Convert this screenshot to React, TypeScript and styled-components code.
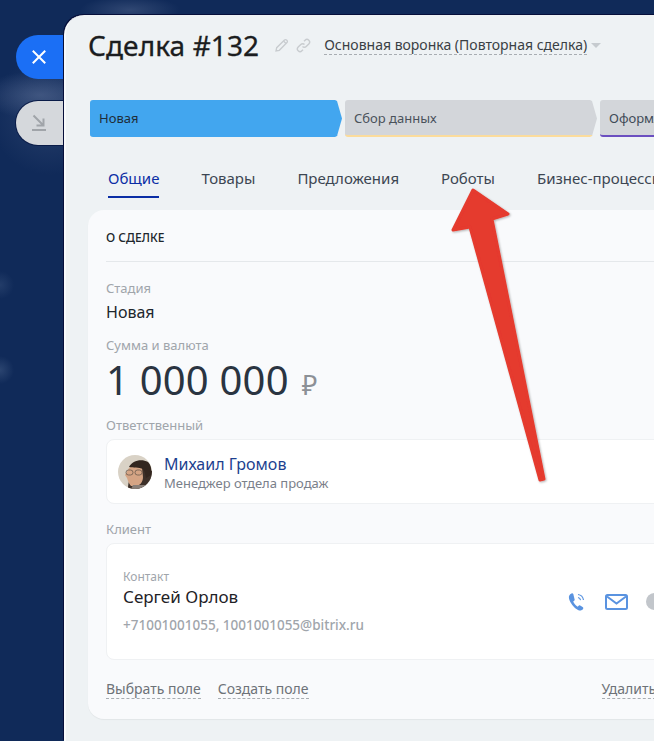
import React from "react";
import styled, { createGlobalStyle } from "styled-components";

const Global = createGlobalStyle`
  html, body { margin: 0; padding: 0; background: #0f2a5a; }
  body { font-family: "Noto Sans", "Open Sans", sans-serif; }
`;

const Page = styled.div`
  position: relative;
  width: 654px;
  height: 741px;
  overflow: hidden;
  display: flex;
  align-items: flex-start;
  background:
    radial-gradient(ellipse 60px 24px at 40px 95px, rgba(90,110,150,0.55), transparent),
    radial-gradient(ellipse 60px 60px at 50px 115px, rgba(80,100,140,0.35), transparent),
    radial-gradient(ellipse 50px 14px at 130px 10px, rgba(80,100,140,0.5), transparent),
    radial-gradient(ellipse 14px 14px at 0px 370px, rgba(70,95,135,0.5), transparent),
    radial-gradient(ellipse 14px 14px at 0px 285px, rgba(70,95,135,0.35), transparent),
    #102a59;
`;

const SideButtons = styled.div`
  flex: none;
  width: 64px;
  padding: 35px 0 0 16px;
  box-sizing: border-box;
  display: flex;
  flex-direction: column;
  gap: 22px;
`;

const SideButton = styled.div<{ $primary?: boolean }>`
  height: 44px;
  width: 60px;
  border-radius: 22px 0 0 22px;
  box-sizing: border-box;
  display: flex;
  align-items: center;
  padding-left: 14px;
  background: ${(p) => (p.$primary ? "#1b6ff5" : "#d5d8dc")};
  ${(p) => (p.$primary ? "" : "box-shadow: 0 0 0 1px #0a1c48;")}
`;

const Panel = styled.div`
  position: relative;
  flex: none;
  width: 900px;
  height: 726px;
  margin-top: 15px;
  box-sizing: border-box;
  background: #eef2f4;
  border-radius: 20px 0 0 0;
  border-left: 2px solid #f8fafb;
  box-shadow: -1px -1px 0 #060f3a;
  padding: 0 0 0 22px;
`;

const TitleRow = styled.div`
  display: flex;
  align-items: center;
  height: 60px;
  padding-top: 0;
`;

const Title = styled.div`
  font-size: 28px;
  line-height: 60px;
  color: #1b1d20;
  font-weight: 400;
  letter-spacing: 0.1px;
  margin-right: 15px;
  -webkit-text-stroke: 0.3px #1b1d20;
`;

const TitleIcon = styled.svg`
  display: block;
  width: 15px;
  height: 15px;
  margin-right: 7px;
`;

const Funnel = styled.span`
  margin-left: 6px;
  font-size: 14px;
  line-height: 18px;
  color: #3a3f44;
  border-bottom: 1px dashed #a8adb2;
`;

const Caret = styled.span`
  width: 0;
  height: 0;
  margin-left: 4px;
  border-left: 5px solid transparent;
  border-right: 5px solid transparent;
  border-top: 5px solid #c6cbcf;
`;

const Stages = styled.div`
  display: flex;
  gap: 3px;
  margin-top: 25px;
  margin-left: 2px;
`;

const Stage = styled.div<{ $bg: string; $line: string; $color: string }>`
  flex: none;
  width: 252px;
  height: 37px;
  box-sizing: border-box;
  padding-left: 9px;
  font-size: 13px;
  line-height: 37px;
  color: ${(p) => p.$color};
  background: ${(p) => p.$bg};
  border-bottom: 2px solid ${(p) => p.$line};
  border-radius: 3px 0 0 3px;
  clip-path: polygon(0 0, 245px 0, 247px 1px, 252px 50%, 247px 36px, 245px 100%, 0 100%);
`;

const Tabs = styled.div`
  display: flex;
  gap: 42px;
  margin-top: 24px;
  padding-left: 20px;
  height: 38px;
`;

const Tab = styled.div<{ $active?: boolean }>`
  font-size: 15px;
  line-height: 34px;
  height: 37px;
  box-sizing: border-box;
  color: ${(p) => (p.$active ? "#0b2ea5" : "#3c4652")};
  border-bottom: ${(p) => (p.$active ? "2px solid #0b2ea5" : "none")};
  white-space: nowrap;
`;

const Card = styled.div`
  width: 860px;
  height: 509px;
  margin-top: 11px;
  box-sizing: border-box;
  background: #f9fafc;
  border-radius: 16px;
  box-shadow: 0 1px 1px rgba(0, 0, 0, 0.05);
  padding: 0 18px;
  display: flex;
  flex-direction: column;
`;

const CardHead = styled.div`
  display: flex;
  justify-content: space-between;
  height: 52px;
  box-sizing: border-box;
  border-bottom: 1px solid #e5e8eb;
  line-height: 56px;
`;

const CardTitle = styled.div`
  font-size: 12px;
  color: #20262c;
  font-weight: 500;
`;

const EditLink = styled.div`
  font-size: 12px;
  color: #a8adb3;
  margin-left: 535px;
  flex: 1;
`;

const Label = styled.div<{ $top: number }>`
  font-size: 13px;
  line-height: 18px;
  color: #a0a5ab;
  margin-top: ${(p) => p.$top}px;
`;

const Value = styled.div`
  font-size: 16px;
  line-height: 22px;
  margin-top: 4px;
  color: #20262c;
`;

const AmountRow = styled.div`
  display: flex;
  align-items: baseline;
  height: 50px;
  line-height: 50px;
  margin-top: 1px;
`;

const Amount = styled.span`
  font-size: 40px;
  letter-spacing: 0.2px;
  color: #2a3441;
`;

const Currency = styled.span`
  font-size: 27px;
  margin-left: 13px;
  color: #8c9096;
`;

const UserBox = styled.div`
  margin-top: 5px;
  height: 65px;
  box-sizing: border-box;
  background: #fff;
  border: 1px solid #eff1f3;
  border-radius: 8px;
  display: flex;
  align-items: center;
  padding-left: 11px;
  gap: 12px;
`;

const Avatar = styled.svg`
  flex: none;
  display: block;
  width: 34px;
  height: 34px;
  border-radius: 50%;
`;

const UserName = styled.div`
  font-size: 16px;
  line-height: 22px;
  color: #1d3f8f;
`;

const UserRole = styled.div`
  font-size: 13px;
  line-height: 16px;
  color: #7a808a;
`;

const ClientBox = styled.div`
  margin-top: 5px;
  height: 117px;
  box-sizing: border-box;
  background: #fff;
  border: 1px solid #eff1f3;
  border-radius: 8px;
  display: flex;
  align-items: center;
  padding-left: 16px;
`;

const ClientInfo = styled.div`
  width: 444px;
  flex: none;
`;

const ContactLabel = styled.div`
  font-size: 12px;
  line-height: 16px;
  color: #a0a5ab;
`;

const ContactName = styled.div`
  font-size: 17px;
  line-height: 24px;
  color: #1f2226;
`;

const ContactData = styled.div`
  font-size: 13.5px;
  line-height: 20px;
  margin-top: 6px;
  color: #a0a5ab;
  font-weight: 500;
`;

const ContactIcons = styled.div`
  display: flex;
  align-items: center;
  gap: 18px;
`;

const ContactIcon = styled.svg`
  display: block;
  flex: none;
`;

const Footer = styled.div`
  display: flex;
  gap: 17px;
  margin-top: 20px;
`;

const FooterLink = styled.span<{ $push?: boolean }>`
  font-size: 14px;
  line-height: 18px;
  color: #6d7278;
  border-bottom: 1px dashed #a8adb2;
  ${(p) => (p.$push ? "margin-left: 276px;" : "")}
`;

const Arrow = styled.svg`
  position: absolute;
  left: 0;
  top: 0;
  pointer-events: none;
`;

export default function App() {
  return (
    <Page>
      <Global />
      <SideButtons>
        <SideButton $primary>
          <svg width="18" height="18" viewBox="0 0 18 18">
            <path d="M3.5 3.5l11 11M14.5 3.5l-11 11" stroke="#fff" strokeWidth="2" strokeLinecap="square" fill="none" />
          </svg>
        </SideButton>
        <SideButton>
          <svg width="18" height="18" viewBox="0 0 18 18" fill="none" stroke="#a0a4a9" strokeWidth="2">
            <path d="M3.5 1.5l10 10M13.5 4.5v7h-7" />
            <path d="M2 16h14" />
          </svg>
        </SideButton>
      </SideButtons>
      <Panel>
        <TitleRow>
          <Title>Сделка #132</Title>
          <TitleIcon viewBox="0 0 15 15" fill="none" stroke="#c8cccf" strokeWidth="1.3">
            <path d="M2 13l.7-3.3L10.5 2a1.4 1.4 0 0 1 2 0l.5.5a1.4 1.4 0 0 1 0 2L5.3 12.3z" />
            <path d="M9.5 3l2.5 2.5" />
          </TitleIcon>
          <TitleIcon viewBox="0 0 15 15" fill="none" stroke="#c8cccf" strokeWidth="1.4">
            <path d="M6.5 8.5a2.6 2.6 0 0 0 3.7 0l2.6-2.6a2.6 2.6 0 0 0-3.7-3.7L8 3.3" />
            <path d="M8.5 6.5a2.6 2.6 0 0 0-3.7 0L2.2 9.1a2.6 2.6 0 0 0 3.7 3.7L7 11.7" />
          </TitleIcon>
          <Funnel>Основная воронка (Повторная сделка)</Funnel>
          <Caret />
        </TitleRow>
        <Stages>
          <Stage $bg="#42a6ef" $line="#42a6ef" $color="#1f2d3a">Новая</Stage>
          <Stage $bg="#d3d6da" $line="#fbdc9c" $color="#4a525b">Сбор данных</Stage>
          <Stage $bg="#d3d6da" $line="#6b4fc0" $color="#3f4b58">Оформление</Stage>
        </Stages>
        <Tabs>
          <Tab $active>Общие</Tab>
          <Tab>Товары</Tab>
          <Tab>Предложения</Tab>
          <Tab>Роботы</Tab>
          <Tab>Бизнес-процессы</Tab>
        </Tabs>
        <Card>
          <CardHead>
            <CardTitle>О СДЕЛКЕ</CardTitle>
            <EditLink>ИЗМЕНИТЬ</EditLink>
          </CardHead>
          <Label $top={17}>Стадия</Label>
          <Value>Новая</Value>
          <Label $top={13}>Сумма и валюта</Label>
          <AmountRow>
            <Amount>1 000 000</Amount>
            <Currency>₽</Currency>
          </AmountRow>
          <Label $top={11}>Ответственный</Label>
          <UserBox>
            <Avatar viewBox="0 0 34 34">
              <rect width="34" height="34" fill="#d9d2c6" />
              <path d="M10 34c0-8 3-12 4-22l10-2 10 6v18z" fill="#3d3029" />
              <path d="M11 13c4-3 9-3 13 0l1 9c0 5-3 9-8 9h-4c-2-2-3-5-4-8l-2-3z" fill="#d5a484" />
              <path d="M11 12c3-6 12-9 19-5 3 3 4 8 3 13l-5 3c-1-4-1-7-3-9-4-2-10-1-14-2z" fill="#33261f" />
              <rect x="8" y="15" width="7" height="5" rx="2.5" fill="none" stroke="#6b5a4f" strokeWidth="0.8" />
              <rect x="17" y="15" width="7" height="5" rx="2.5" fill="none" stroke="#6b5a4f" strokeWidth="0.8" />
              <path d="M15 30h15v4H13z" fill="#8a7f78" />
            </Avatar>
            <div>
              <UserName>Михаил Громов</UserName>
              <UserRole>Менеджер отдела продаж</UserRole>
            </div>
          </UserBox>
          <Label $top={16}>Клиент</Label>
          <ClientBox>
            <ClientInfo>
              <ContactLabel>Контакт</ContactLabel>
              <ContactName>Сергей Орлов</ContactName>
              <ContactData>+71001001055, 1001001055@bitrix.ru</ContactData>
            </ClientInfo>
            <ContactIcons>
              <ContactIcon width="20" height="20" viewBox="0 0 20 20" fill="none">
                <path d="M4.5 1.5c-2 1-3 2.500-2.500 5 .8 4 5 9.500 9 11.500 2 1 4 .5 5-1 .6-.9.3-1.500-.4-2l-2.400-1.500c-.7-.4-1.300-.2-1.800.4l-.7.9c-1.800-1-3.700-3.300-4.500-5.300l1-.8c.6-.5.700-1.100.3-1.800L6.300 2c-.4-.7-1-.9-1.800-.5z" fill="#5a93e0" />
                <path d="M11 2.500c2.800.4 5 2.500 5.500 5.500M11 5.500c1.300.3 2.300 1.300 2.600 2.700" stroke="#5a93e0" strokeWidth="1.200" />
              </ContactIcon>
              <ContactIcon width="23" height="16" viewBox="0 0 23 16" fill="none" stroke="#5a93e0" strokeWidth="2">
                <rect x="1" y="1" width="21" height="14" rx="1.500" />
                <path d="M2 2.500l9.500 7 9.500-7" />
              </ContactIcon>
              <ContactIcon width="17" height="17" viewBox="0 0 17 17">
                <circle cx="8.500" cy="8.500" r="8.500" fill="#c2c6cb" />
              </ContactIcon>
            </ContactIcons>
          </ClientBox>
          <Footer>
            <FooterLink>Выбрать поле</FooterLink>
            <FooterLink>Создать поле</FooterLink>
            <FooterLink $push>Удалить раздел</FooterLink>
          </Footer>
        </Card>
      </Panel>
      <Arrow width="654" height="741" viewBox="0 0 654 741">
        <defs>
          <filter id="s" x="-20%" y="-20%" width="140%" height="140%">
            <feDropShadow dx="1" dy="1" stdDeviation="1.200" floodColor="#000" floodOpacity="0.3" />
          </filter>
        </defs>
        <path
          d="M473 190 L508 214 L492 219 L544 479 L540 480 L470 227 L453 230 Z"
          fill="#e53a2e"
          stroke="#e53a2e"
          strokeWidth="3"
          strokeLinejoin="round"
          filter="url(#s)"
        />
      </Arrow>
    </Page>
  );
}
